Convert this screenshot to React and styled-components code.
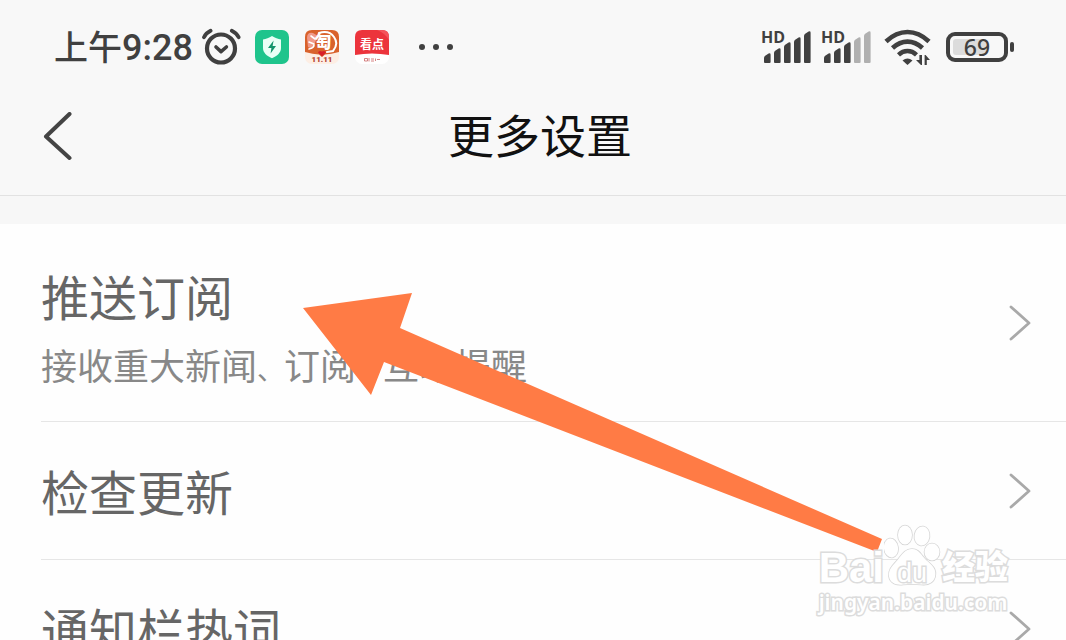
import React from "react";
import styled, { createGlobalStyle } from "styled-components";

const rows = [
  { id: "push", title: "推送订阅", topics: ["接收重大新闻", "订阅", "互动提醒"] },
  { id: "update", title: "检查更新" },
  { id: "hotwords", title: "通知栏热词" },
];

const AlarmIcon = () => (
  <svg width="40" height="38" viewBox="0 0 40 38" fill="none" stroke="#404040" strokeLinecap="round" strokeLinejoin="round">
    <circle cx="20" cy="20.500" r="14" strokeWidth="4.200" />
    <path d="M15 19l5 4.600 5.400-4.600" strokeWidth="3.600" />
    <path d="M3 9.200Q5 5 9.600 2.800M37.600 9.200Q35.400 5 30.800 2.800" strokeWidth="3.800" />
  </svg>
);

const ShieldIcon = () => (
  <svg width="34" height="34" viewBox="0 0 34 34">
    <rect width="34" height="34" rx="7" fill="#1fc48c" />
    <path d="M17 6c3 2 6 3 9 3.400v8.600c0 4.600-3.600 7.800-9 10.200-5.400-2.400-9-5.600-9-10.200V9.400C11 9 14 8 17 6z" fill="#e9fff6" />
    <path d="M18.600 10.500l-5.600 7.500h3.400l-.8 5.500 5.400-7.500h-3.400z" fill="#12946b" />
  </svg>
);

const TaobaoIcon = () => (
  <svg width="34" height="34" viewBox="0 0 34 34">
    <rect width="34" height="34" rx="7" fill="#fdeee4" />
    <path d="M0 22V7q0-7 7-7h20q7 0 7 7v15q-8 2-14 2.500l-3 2.500-3-2.500Q8 24 0 22z" fill="#d9622c" />
    <path d="M2 8q0-6 6-5l5 3-6 13-4-2z" fill="#f09a8a" />
    <path d="M14 3q10-3 15 4t-1 14l-6 1" fill="none" stroke="#fff" strokeWidth="2" strokeLinecap="round" />
    <path d="M6 6l4 3M4 12l5 2M4 19q5-1 5-4" fill="none" stroke="#fff" strokeWidth="1.600" strokeLinecap="round" />
    <path d="M17 26.500l-4-4q1-2.500 4-1 3-1.500 4 1z" fill="#d8202a" />
    <Glyph x="18" y="18">匋</Glyph>
    <Sale x="17" y="32">11.11</Sale>
  </svg>
);

const KandianIcon = () => (
  <svg width="34" height="34" viewBox="0 0 34 34">
    <rect width="34" height="34" rx="7" fill="#fff" />
    <path d="M0 25V7q0-7 7-7h20q7 0 7 7v18q-17-3-34 0z" fill="#ec343c" />
    <path d="M22 0h5q7 0 7 7v3q-4-7-12-10z" fill="#f4545a" />
    <Label x="17" y="19">看点</Label>
    <path d="M9.500 28.500h3v2.500h-3zM14 28v3.500M16 29h3M16 31h3M20.500 28.500v2.500M22 29.500h3" fill="none" stroke="#c66" strokeWidth=".8" />
  </svg>
);

const SignalIcon = ({ level }) => (
  <svg width="50" height="34" viewBox="0 0 50 34">
    {[8, 13, 19, 24, 30].map((h, i) => (
      <path
        key={h}
        d={`M${i * 10 + 1} 32V${32 - h + 4}q0-1.500 1.200-2.200l3.400-2.200q2-.8 2 1.200V32q0 1-1 1h-4.600q-1 0-1-1z`}
        fill={i < level ? "#404040" : "#b0b0b0"}
      />
    ))}
  </svg>
);

const WifiIcon = () => (
  <svg width="48" height="38" viewBox="0 0 48 38" fill="none" stroke="#404040">
    <path d="M2 13.500Q12 4 23.500 4T45 13.500" strokeWidth="4.600" />
    <path d="M8.500 20Q15.500 13.600 23.500 13.600T38.500 20" strokeWidth="4.600" />
    <path d="M14.500 26.800Q18.500 23 23.500 23T32.500 26.800" strokeWidth="4.400" />
    <path d="M23.500 37l-5-4.600q5-3.600 10 0z" fill="#404040" stroke="none" />
    <path d="M38 27h-2.600v5H32l5 5h1zM40.600 37h2.200v-5H46l-4.400-5h-1z" fill="#404040" stroke="none" />
  </svg>
);

const BackIcon = () => (
  <svg width="30" height="50" viewBox="0 0 30 50" fill="none" stroke="#444" strokeWidth="4" strokeLinecap="round" strokeLinejoin="round">
    <path d="M27.500 2L4 24.500 27.500 46" />
  </svg>
);

const ChevronIcon = () => (
  <svg width="22" height="36" viewBox="0 0 22 36" fill="none" stroke="#a9a9a9" strokeWidth="2.800" strokeLinecap="round" strokeLinejoin="round">
    <path d="M2 2l18 16L2 34" />
  </svg>
);

const PawIcon = () => (
  <svg width="58" height="64" viewBox="0 0 58 64" fill="#fff" stroke="#d6d6d6" strokeWidth="1.600">
    <ellipse cx="7" cy="24" rx="7" ry="9.500" transform="rotate(-8 7 24)" />
    <ellipse cx="21" cy="11" rx="7" ry="9.500" />
    <ellipse cx="38" cy="12" rx="7.500" ry="9.500" transform="rotate(8 38 12)" />
    <ellipse cx="48" cy="28" rx="7.500" ry="8.500" />
    <path d="M28 25c7 0 9 6 14 11 6 5 11 9 9 17-2 7-9 8-14 7.500-6-.8-12-.8-18 0-6 .8-13-1-14-8-1-8 5-12 9-17 4-5 7-10.500 14-10.500z" />
  </svg>
);

const App = () => {
  return (
    <Page>
      <GlobalStyle />
      <StatusBar>
        <StatusGroup>
          <Clock>上午<Digits>9:28</Digits></Clock>
          <AlarmIcon />
          <AppIcons>
            <ShieldIcon />
            <TaobaoIcon />
            <KandianIcon />
          </AppIcons>
          <Dots><i /><i /><i /></Dots>
        </StatusGroup>
        <StatusGroup>
          <Signal><Hd>HD</Hd><SignalIcon level={5} /></Signal>
          <Signal><Hd>HD</Hd><SignalIcon level={3} /></Signal>
          <Wifi><WifiIcon /></Wifi>
          <Battery><Charge>69</Charge></Battery>
        </StatusGroup>
      </StatusBar>

      <Header>
        <BackButton aria-label="返回"><BackIcon /></BackButton>
        <Title>更多设置</Title>
      </Header>

      <List>
        {rows.map((row) => (
          <Row key={row.id} $tall={!!row.topics}>
            <RowButton>
              <RowText $tall={!!row.topics}>
                <RowTitle>{row.title}</RowTitle>
                {row.topics && (
                  <RowHint>
                    {row.topics.map((topic, i) => (
                      <React.Fragment key={topic}>
                        {i > 0 && <Comma>、</Comma>}
                        {topic}
                      </React.Fragment>
                    ))}
                  </RowHint>
                )}
              </RowText>
              <ChevronIcon />
            </RowButton>
          </Row>
        ))}
      </List>

      <Pointer width="580" height="260" viewBox="303 293 580 260">
        <path d="M303 308L412 293 400 328 882 539 877 552 384 362 371 395z" fill="#ff7b45" />
      </Pointer>

      <Watermark>
        <Brand>
          <Bai>Bai</Bai>
          <Paw><PawIcon /><Du>du</Du></Paw>
          <Jingyan>经验</Jingyan>
        </Brand>
        <Site>jingyan.baidu.com</Site>
      </Watermark>
    </Page>
  );
};

//STYLED-COMPONENTS
const GlobalStyle = createGlobalStyle`
  * {
    box-sizing: border-box;
  }

  body {
    margin: 0;
    background: #fefefe;
    font-family: Roboto, "Noto Sans CJK SC", sans-serif;
  }

  svg {
    display: block;
    flex-shrink: 0;
  }

  button {
    border: none;
    background: none;
    padding: 0;
    font: inherit;
    color: inherit;
    text-align: left;
    cursor: pointer;
  }
`

const Page = styled.div`
  position: relative;
  height: 100vh;
  overflow: hidden;
`

const StatusBar = styled.div`
  display: flex;
  justify-content: space-between;
  align-items: center;
  height: 78px;
  padding: 16px 58px 0 54px;
  background: #f8f8f8;
  color: #404040;
`

const StatusGroup = styled.div`
  display: flex;
  align-items: center;
  gap: 8px;
`

const Clock = styled.div`
  display: flex;
  align-items: center;
  padding-top: 2px;
  font-size: 34px;
  line-height: 40px;
  font-weight: 500;
`

const Digits = styled.span`
  font-size: 36px;
`

const AppIcons = styled.div`
  display: flex;
  gap: 16px;
  margin-left: 6px;
`

const Glyph = styled.text`
  fill: #fff;
  font-size: 17px;
  font-weight: 900;
  text-anchor: middle;
`

const Sale = styled.text`
  fill: #b5432f;
  font-size: 8px;
  font-weight: 900;
  text-anchor: middle;
`

const Label = styled.text`
  fill: #fff;
  font-size: 12px;
  font-weight: 700;
  text-anchor: middle;
`

const Dots = styled.div`
  display: flex;
  gap: 8px;
  margin-left: 22px;

  & > i {
    width: 6px;
    height: 6px;
    border-radius: 50%;
    background: #404040;
  }
`

const Signal = styled.div`
  position: relative;
  padding-left: 2px;
`

const Hd = styled.span`
  position: absolute;
  left: 0;
  top: 0;
  font-family: "Open Sans", sans-serif;
  font-size: 16px;
  line-height: 14px;
  font-weight: 700;
`

const Wifi = styled.div`
  margin-left: 3px;
`

const Battery = styled.div`
  position: relative;
  display: flex;
  align-items: center;
  width: 62px;
  height: 30px;
  margin-left: 6px;
  padding: 3px;
  border: 4px solid #404040;
  border-radius: 9px;

  &::after {
    content: "";
    position: absolute;
    right: -10px;
    top: 6px;
    width: 4px;
    height: 10px;
    border-radius: 2px;
    background: #404040;
  }
`

const Charge = styled.span`
  flex: 1;
  border-radius: 3px;
  background: linear-gradient(to right, #dcdcdc 69%, transparent 69%);
  font-family: "Noto Sans", sans-serif;
  font-size: 23px;
  line-height: 16px;
  font-weight: 500;
  text-align: center;
`

const Header = styled.header`
  display: grid;
  grid-template-columns: 1fr auto 1fr;
  align-items: center;
  height: 118px;
  padding: 0 28px 0 42px;
  border-bottom: 1px solid #e2e2e2;
  background: #f8f8f8;
`

const BackButton = styled.button`
  justify-self: start;
`

const Title = styled.h1`
  margin: 0;
  color: #111;
  font-size: 46px;
  line-height: 60px;
  font-weight: 400;
`

const List = styled.ul`
  margin: 0;
  padding: 0 0 0 41px;
  border-top: 28px solid #f7f7f7;
  list-style: none;
`

const Row = styled.li`
  height: ${(props) => (props.$tall ? "198px" : "138px")};
  border-bottom: 1px solid #e6e6e6;
`

const RowButton = styled.button`
  display: flex;
  justify-content: space-between;
  align-items: center;
  width: 100%;
  height: 100%;
  padding-right: 35px;
`

const RowText = styled.div`
  display: flex;
  flex-direction: column;
  gap: 12px;
  padding-top: ${(props) => (props.$tall ? "18px" : "8px")};
`

const RowTitle = styled.span`
  color: #666;
  font-size: 48px;
  line-height: 64px;
`

const RowHint = styled.span`
  color: #888;
  font-size: 36px;
  line-height: 48px;
`

const Comma = styled.span`
  font-size: 27px;
`

const Pointer = styled.svg`
  position: absolute;
  left: 303px;
  top: 293px;
`

const Watermark = styled.div`
  position: absolute;
  right: 58px;
  bottom: 24px;
  color: #fff;
  font-family: "Liberation Sans", "Noto Sans CJK SC", sans-serif;
  font-weight: 700;
  -webkit-text-stroke: 3px #dcdcdc;
  paint-order: stroke fill;
`

const Brand = styled.div`
  display: flex;
  align-items: flex-end;
  height: 64px;
`

const Bai = styled.span`
  font-size: 42px;
  line-height: 40px;
`

const Paw = styled.div`
  position: relative;
`

const Du = styled.span`
  position: absolute;
  left: 0;
  right: 2px;
  bottom: 0;
  font-size: 27px;
  line-height: 30px;
  font-weight: 400;
  text-align: center;
`

const Jingyan = styled.span`
  font-size: 33px;
  line-height: 40px;
  font-weight: 900;
`

const Site = styled.div`
  font-family: "Noto Sans", sans-serif;
  font-size: 21px;
  line-height: 28px;
  font-weight: 600;
`

export default App;
